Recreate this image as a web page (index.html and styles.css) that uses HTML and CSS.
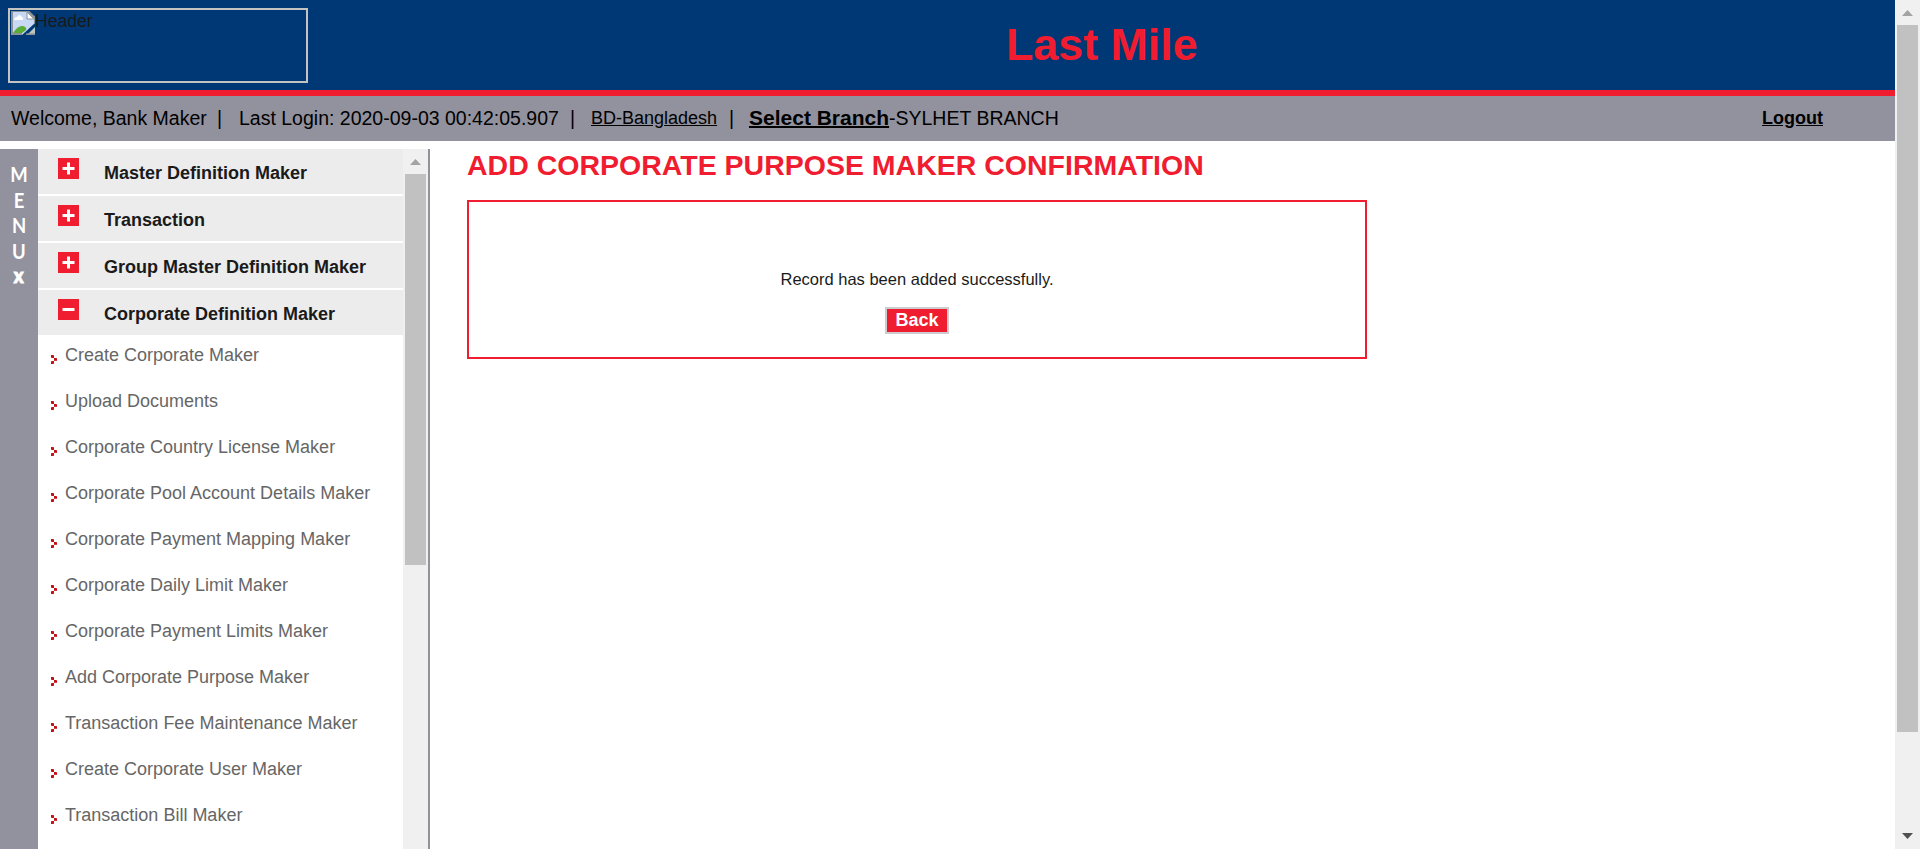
FILE: index.html
```
<!DOCTYPE html>
<html lang="en">
<head>
<meta charset="utf-8">
<title>Last Mile</title>
<link rel="stylesheet" href="styles.css">
</head>
<body>
<div class="page">
  <header class="banner">
    <div class="logo">
      <svg class="broken" width="24" height="24" viewBox="0 0 24 24">
        <path d="M0 0H17L24 7V12L11 24H0Z" fill="#c8d8f5"/>
        <path d="M3 9Q3 6 6 6Q8 2 11 6Q13 7 12 9Z" fill="#fff"/>
        <path d="M2 22Q7 14 12 15Q16 16 15 19L11 22Z" fill="#5aad35"/>
        <path d="M24 12V7L17 0H1V23H11" fill="none" stroke="#8d9296" stroke-width="2"/>
        <path d="M16 1V8H23Z" fill="#fff" stroke="#8d9296"/>
        <path d="M24 16V24H16Z" fill="#b9c6c4"/><path d="M15 23.2H24" stroke="#8d9296" stroke-width="1.6"/>
      </svg><span>Header</span>
    </div>
    <h1 class="brand">Last Mile</h1>
  </header>
  <nav class="userbar">
    <span class="welcome">Welcome, Bank Maker</span><span class="bar bar-a">|</span>
    <span class="login">Last Login: 2020-09-03 00:42:05.907</span><span class="bar bar-b">|</span>
    <a class="country">BD-Bangladesh</a><span class="bar bar-c">|</span>
    <a class="branch">Select Branch</a><span class="branch-name">-SYLHET BRANCH</span>
    <a class="logout">Logout</a>
  </nav>
  <div class="body">
    <div class="strip"><span>M</span><span>E</span><span>N</span><span>U</span><span class="close">x</span></div>
    <div class="menu">
      <div class="group"><svg class="toggle" viewBox="0 0 21 21"><path d="M4.5 10.5H16.5M10.5 4.5V16.5"/></svg><span>Master Definition Maker</span></div>
      <div class="group"><svg class="toggle" viewBox="0 0 21 21"><path d="M4.5 10.5H16.5M10.5 4.5V16.5"/></svg><span>Transaction</span></div>
      <div class="group"><svg class="toggle" viewBox="0 0 21 21"><path d="M4.5 10.5H16.5M10.5 4.5V16.5"/></svg><span>Group Master Definition Maker</span></div>
      <div class="group open"><svg class="toggle" viewBox="0 0 21 21"><path d="M4.5 10.5H16.5"/></svg><span>Corporate Definition Maker</span></div>
      <svg class="defs" width="0" height="0"><symbol id="arrow" viewBox="0 0 6 9"><path d="M0 0H3V3H0ZM3 3H6V6H3ZM0 6H3V9H0Z" fill="#d23a3e"/><path d="M0 0H2V2H0ZM1 1H3V3H1ZM3 3H5V5H3ZM4 4H6V5H4ZM0 7H2V9H0ZM1 6H3V8H1Z" fill="#c01218"/></symbol></svg>
      <ul class="links">
        <li><svg class="arrow"><use href="#arrow"/></svg>Create Corporate Maker</li>
        <li><svg class="arrow"><use href="#arrow"/></svg>Upload Documents</li>
        <li><svg class="arrow"><use href="#arrow"/></svg>Corporate Country License Maker</li>
        <li><svg class="arrow"><use href="#arrow"/></svg>Corporate Pool Account Details Maker</li>
        <li><svg class="arrow"><use href="#arrow"/></svg>Corporate Payment Mapping Maker</li>
        <li><svg class="arrow"><use href="#arrow"/></svg>Corporate Daily Limit Maker</li>
        <li><svg class="arrow"><use href="#arrow"/></svg>Corporate Payment Limits Maker</li>
        <li><svg class="arrow"><use href="#arrow"/></svg>Add Corporate Purpose Maker</li>
        <li><svg class="arrow"><use href="#arrow"/></svg>Transaction Fee Maintenance Maker</li>
        <li><svg class="arrow"><use href="#arrow"/></svg>Create Corporate User Maker</li>
        <li><svg class="arrow"><use href="#arrow"/></svg>Transaction Bill Maker</li>
      </ul>
    </div>
    <div class="scroll menu-scroll">
      <svg class="up" width="25" height="25"><path d="M7 16L12.5 10L18 16Z"/></svg>
      <div class="thumb"></div>
    </div>
    <main class="content">
      <h2>ADD CORPORATE PURPOSE MAKER CONFIRMATION</h2>
      <section class="panel">
        <p>Record has been added successfully.</p>
        <button class="back">Back</button>
      </section>
    </main>
  </div>
</div>
<div class="scroll page-scroll">
  <svg class="up" width="25" height="25"><path d="M7 16L12.5 10L18 16Z"/></svg>
  <div class="thumb"></div>
  <svg class="down" width="25" height="25"><path d="M7 9L12.5 15L18 9Z"/></svg>
</div>
</body>
</html>
```

FILE: styles.css
```
* { box-sizing: border-box; }
body {
  margin: 0; height: 849px; overflow: hidden; display: flex;
  font-family: "Liberation Sans", Arial, sans-serif; color: #1a1a1a; background: #fff;
  white-space: nowrap;
}
svg { display: block; flex: none; }
.page { width: 1895px; display: flex; flex-direction: column; }
.banner { height: 96px; flex: none; background: #003876; border-bottom: 6px solid #ef1d2f; display: flex; padding: 8px 0 0 8px; }
.logo { width: 300px; height: 75px; border: 2px solid #c3c3c3; padding: 1px; display: flex; font-size: 17.6px; line-height: 20px; }
.logo svg { width: 24px; height: 24px; }
.brand { margin: 11px 0 0 698px; color: #ef1d2f; font-size: 44.8px; line-height: 50px; font-weight: bold; }
.userbar { height: 45px; flex: none; background: #92929e; color: #000; display: flex; font-size: 19.5px; line-height: 45px; padding-left: 11px; }
.userbar span, .userbar a { flex: none; }
.welcome { width: 206px; }
.bar-a { width: 22px; }
.login { width: 331px; }
.bar-b { width: 21px; }
.country { width: 138px; font-size: 18px; text-decoration: underline; }
.bar-c { width: 20px; }
.branch { width: 140px; font-size: 21px; line-height: 43px; font-weight: bold; text-decoration: underline 2px; }
.logout { margin-left: auto; margin-right: 72px; font-size: 18px; font-weight: bold; text-decoration: underline; }
.body { flex: 1; margin-top: 8px; display: flex; min-height: 0; }
.strip { width: 38px; background: #92929e; color: #fff; font: bold 21px/25.5px Lato, sans-serif; display: flex; flex-direction: column; align-items: center; padding-top: 12px; }
.strip span { transform: scaleX(.88); }
.strip .close { font-weight: 900; line-height: 23px; -webkit-text-stroke: 1px #fff; }
.menu { width: 365px; overflow: hidden; }
.group { height: 45px; margin-bottom: 2px; background: #ececec; display: flex; padding: 9px 0 0 20px; font-size: 18px; line-height: 30px; font-weight: bold; }
.group.open { margin-bottom: 0; }
.group span { margin-left: 25px; }
.toggle { width: 21px; height: 21px; background: #ef1d2f; fill: none; stroke: #fff; stroke-width: 3; }
.links { list-style: none; margin: 0; padding: 0; color: #666; font-size: 18px; }
.links li { height: 46px; line-height: 40px; display: flex; padding-left: 13px; }
.arrow { width: 6px; height: 9px; margin: 20px 8px 0 0; }
.scroll { width: 25px; flex: none; background: #f0f0f0; }
.up { fill: #a3a3a3; }
.down { fill: #505050; }
.thumb { margin-left: 2px; width: 21px; background: #c1c1c1; }
.menu-scroll { width: 27px; border-right: 2px solid #92929e; }
.menu-scroll .thumb { height: 391px; }
.page-scroll { display: flex; flex-direction: column; }
.page-scroll .thumb { height: 707px; }
.page-scroll .down { margin-top: auto; }
.content { padding-left: 37px; }
h2 { margin: 0; color: #ef1d2f; font-size: 28.5px; line-height: 32px; }
.panel { width: 900px; height: 159px; margin-top: 19px; border: 2px solid #ef1d2f; display: flex; flex-direction: column; align-items: center; padding-top: 66px; }
.panel p { margin: 0; font-size: 16.5px; line-height: 22px; }
.back { margin-top: 17px; width: 64px; height: 27px; padding: 0 0 1px; border: 2px solid #cdcdd0; background: #ef1d2f; color: #fff; font: bold 18px/20px "Liberation Sans", Arial, sans-serif; }
```
